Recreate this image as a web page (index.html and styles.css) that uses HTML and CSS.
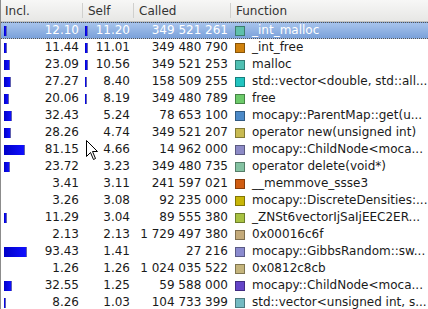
FILE: index.html
```html
<!DOCTYPE html>
<html lang="en">
<head>
    <meta charset="UTF-8">
    <title>Flat Profile</title>
    <link rel="stylesheet" href="styles.css">
</head>
<body>
    <div class="profile">
        <div class="header">
            <div class="hcell">Incl.</div>
            <div class="hcell">Self</div>
            <div class="hcell">Called</div>
            <div class="hcell">Function</div>
        </div>

        <div class="row selected">
            <div class="cell num"><span class="bar" style="width: 3px"></span><span class="val">12.10</span></div>
            <div class="cell num"><span class="bar" style="width: 3px"></span><span class="val">11.20</span></div>
            <div class="cell called">349 521 261</div>
            <div class="cell fn"><span class="swatch" style="background: #5ec0aa"></span>_int_malloc</div>
        </div>
        <div class="row">
            <div class="cell num"><span class="bar" style="width: 3px"></span><span class="val">11.44</span></div>
            <div class="cell num"><span class="bar" style="width: 3px"></span><span class="val">11.01</span></div>
            <div class="cell called">349 480 790</div>
            <div class="cell fn"><span class="swatch" style="background: #d0820e"></span>_int_free</div>
        </div>
        <div class="row">
            <div class="cell num"><span class="bar" style="width: 6px"></span><span class="val">23.09</span></div>
            <div class="cell num"><span class="bar" style="width: 3px"></span><span class="val">10.56</span></div>
            <div class="cell called">349 521 253</div>
            <div class="cell fn"><span class="swatch" style="background: #4fc0b2"></span>malloc</div>
        </div>
        <div class="row">
            <div class="cell num"><span class="bar" style="width: 7px"></span><span class="val">27.27</span></div>
            <div class="cell num"><span class="bar" style="width: 2px"></span><span class="val">8.40</span></div>
            <div class="cell called">158 509 255</div>
            <div class="cell fn"><span class="swatch" style="background: #22c4c0"></span>std::vector&lt;double, std::all...</div>
        </div>
        <div class="row">
            <div class="cell num"><span class="bar" style="width: 5px"></span><span class="val">20.06</span></div>
            <div class="cell num"><span class="bar" style="width: 2px"></span><span class="val">8.19</span></div>
            <div class="cell called">349 480 789</div>
            <div class="cell fn"><span class="swatch" style="background: #6cca6a"></span>free</div>
        </div>
        <div class="row">
            <div class="cell num"><span class="bar" style="width: 8px"></span><span class="val">32.43</span></div>
            <div class="cell num"><span class="val">5.24</span></div>
            <div class="cell called">78 653 100</div>
            <div class="cell fn"><span class="swatch" style="background: #4c8ac8"></span>mocapy::ParentMap::get(u...</div>
        </div>
        <div class="row">
            <div class="cell num"><span class="bar" style="width: 7px"></span><span class="val">28.26</span></div>
            <div class="cell num"><span class="val">4.74</span></div>
            <div class="cell called">349 521 207</div>
            <div class="cell fn"><span class="swatch" style="background: #c8ba52"></span>operator new(unsigned int)</div>
        </div>
        <div class="row">
            <div class="cell num"><span class="bar" style="width: 21px"></span><span class="val">81.15</span></div>
            <div class="cell num"><span class="val">4.66</span></div>
            <div class="cell called">14 962 000</div>
            <div class="cell fn"><span class="swatch" style="background: #8c8ac6"></span>mocapy::ChildNode&lt;moca...</div>
        </div>
        <div class="row">
            <div class="cell num"><span class="bar" style="width: 6px"></span><span class="val">23.72</span></div>
            <div class="cell num"><span class="val">3.23</span></div>
            <div class="cell called">349 480 735</div>
            <div class="cell fn"><span class="swatch" style="background: #84c2a2"></span>operator delete(void*)</div>
        </div>
        <div class="row">
            <div class="cell num"><span class="val">3.41</span></div>
            <div class="cell num"><span class="val">3.11</span></div>
            <div class="cell called">241 597 021</div>
            <div class="cell fn"><span class="swatch" style="background: #d05c12"></span>__memmove_ssse3</div>
        </div>
        <div class="row">
            <div class="cell num"><span class="val">3.26</span></div>
            <div class="cell num"><span class="val">3.08</span></div>
            <div class="cell called">92 235 000</div>
            <div class="cell fn"><span class="swatch" style="background: #c8b608"></span>mocapy::DiscreteDensities:...</div>
        </div>
        <div class="row">
            <div class="cell num"><span class="bar" style="width: 3px"></span><span class="val">11.29</span></div>
            <div class="cell num"><span class="val">3.04</span></div>
            <div class="cell called">89 555 380</div>
            <div class="cell fn"><span class="swatch" style="background: #a8c242"></span>_ZNSt6vectorIjSaIjEEC2ER...</div>
        </div>
        <div class="row">
            <div class="cell num"><span class="val">2.13</span></div>
            <div class="cell num"><span class="val">2.13</span></div>
            <div class="cell called">1 729 497 380</div>
            <div class="cell fn"><span class="swatch" style="background: #c4aa7a"></span>0x00016c6f</div>
        </div>
        <div class="row">
            <div class="cell num"><span class="bar" style="width: 23px"></span><span class="val">93.43</span></div>
            <div class="cell num"><span class="val">1.41</span></div>
            <div class="cell called">27 216</div>
            <div class="cell fn"><span class="swatch" style="background: #8a8ace"></span>mocapy::GibbsRandom::sw...</div>
        </div>
        <div class="row">
            <div class="cell num"><span class="val">1.26</span></div>
            <div class="cell num"><span class="val">1.26</span></div>
            <div class="cell called">1 024 035 522</div>
            <div class="cell fn"><span class="swatch" style="background: #c4b47c"></span>0x0812c8cb</div>
        </div>
        <div class="row">
            <div class="cell num"><span class="bar" style="width: 8px"></span><span class="val">32.55</span></div>
            <div class="cell num"><span class="val">1.25</span></div>
            <div class="cell called">59 588 000</div>
            <div class="cell fn"><span class="swatch" style="background: #6444c8"></span>mocapy::ChildNode&lt;moca...</div>
        </div>
        <div class="row">
            <div class="cell num"><span class="bar" style="width: 2px"></span><span class="val">8.26</span></div>
            <div class="cell num"><span class="val">1.03</span></div>
            <div class="cell called">104 733 399</div>
            <div class="cell fn"><span class="swatch" style="background: #74bac2"></span>std::vector&lt;unsigned int, s...</div>
        </div>

        <svg class="cursor" width="13" height="21" viewBox="0 0 13 21">
            <path d="M0.5 0.5 L0.5 16.5 L4.5 12.5 L7.5 19.5 L9.5 18.5 L6.5 11.5 L11.5 11.5 Z" fill="#fff" stroke="#000" stroke-width="1"/>
        </svg>
    </div>
</body>
</html>
```

FILE: styles.css
```css
body {
    margin: 0;
    background-color: #fff;
    font-family: "DejaVu Sans", "Liberation Sans", sans-serif;
    font-size: 12px;
    color: #1a1a1a;
    overflow: hidden;
}
.profile {
    position: relative;
    width: 428px;
    height: 309px;
    border-left: 1px solid #8c8c8c;
    box-sizing: border-box;
    overflow: hidden;
}
.header {
    display: grid;
    grid-template-columns: 81px 51px 97px 1fr;
    height: 21px;
    background: linear-gradient(#f7f7f6, #e7e7e5);
    border-bottom: 1px solid #c4c4c2;
    color: #333;
}
.hcell {
    display: flex;
    align-items: center;
    padding-left: 5px;
    border-left: 1px solid #d0d0ce;
    margin: 3px 0;
    height: 15px;
}
.hcell:first-child {
    border-left: none;
    padding-left: 4px;
}
.row {
    display: grid;
    grid-template-columns: 81px 51px 97px 1fr;
    height: 17px;
    line-height: 15px;
    box-sizing: border-box;
    border-top: 1px solid transparent;
    border-bottom: 1px solid transparent;
    white-space: nowrap;
}
.row.selected {
    background: linear-gradient(#a8c4ec, #7aa1da);
    color: #fff;
    border-top: 1px dotted #555;
    border-bottom: 1px dotted #555;
}
.cell {
    overflow: hidden;
}
.num {
    display: flex;
    align-items: center;
    padding: 0 3px 0 3px;
}
.num .val {
    margin-left: auto;
}
.bar {
    display: block;
    height: 10px;
    background: linear-gradient(90deg, #0000c8, #1010ff);
    border-right: 1px solid #6060b0;
    box-sizing: border-box;
}
.called {
    text-align: right;
    padding-right: 2px;
}
.fn {
    display: flex;
    align-items: center;
    padding-left: 5px;
}
.swatch {
    display: block;
    width: 10px;
    height: 10px;
    margin-right: 7px;
    box-sizing: border-box;
    border: 1px solid rgba(0, 0, 0, 0.35);
    flex-shrink: 0;
}
.cursor {
    position: absolute;
    left: 85px;
    top: 140px;
}
```
